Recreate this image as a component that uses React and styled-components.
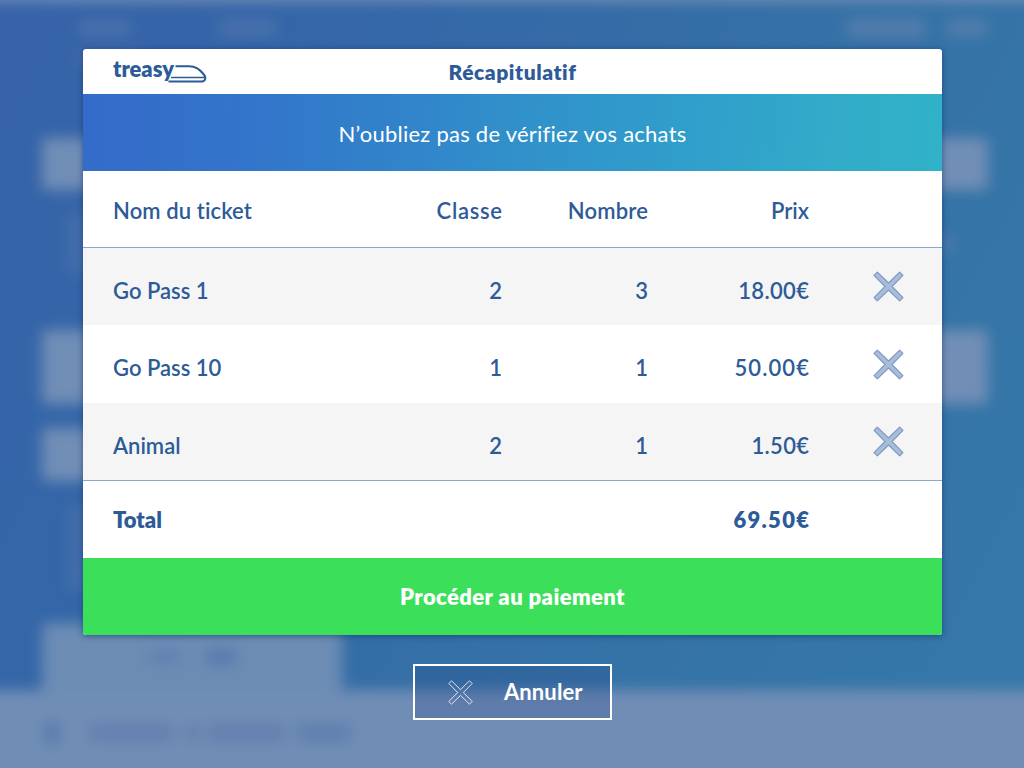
import React from "react";
import styled, { createGlobalStyle } from "styled-components";

const ink = "#2d5b98";

const GlobalStyle = createGlobalStyle`
  * { box-sizing: border-box; }
  body {
    margin: 0;
    font-family: Lato, "Open Sans", "Liberation Sans", sans-serif;
    font-size: 22px;
    font-variant-ligatures: none;
    color: ${ink};
    overflow: hidden;
  }
  button { font: inherit; color: inherit; cursor: pointer; }
`;

const Screen = styled.div`
  display: grid;
  width: 1024px;
  height: 768px;
  overflow: hidden;
  background: linear-gradient(118deg, #3763a9 0%, #3467a8 28%, #3570a6 55%, #3579a9 100%);
`;

/* Page behind the dialog, out of focus */
const Backdrop = styled.div`
  grid-area: 1 / 1;
  width: 1024px;
  height: 768px;
  display: flex;
  flex-direction: column;
  overflow: hidden;
`;

const Blurred = styled.div`
  display: flex;
  flex-direction: column;
  width: 1084px;
  margin: -30px -30px 0;
  flex: 0 0 828px;
  filter: blur(7px);
`;

const TopEdge = styled.div`
  height: 32px;
  flex: none;
  background: #6f8cb4;
`;

const BackdropBody = styled.div`
  display: flex;
  flex-direction: column;
  flex: 0 0 688px;
  padding: 13px 66px 0 72px;
`;

const BlurRow = styled.div`
  display: flex;
  flex: none;
  align-items: center;
  height: ${(p) => p.$h}px;
  margin-bottom: ${(p) => p.$gap || 0}px;
`;

const Smudge = styled.span`
  width: ${(p) => p.$w}px;
  height: ${(p) => p.$h || 16}px;
  margin-left: ${(p) => p.$left || 0}px;
  border-radius: 6px;
  background: ${(p) => p.$tone || "rgba(112, 135, 180, 0.4)"};
`;

const Field = styled.div`
  flex: none;
  width: ${(p) => (p.$w ? p.$w + "px" : "auto")};
  height: ${(p) => p.$h}px;
  margin-bottom: ${(p) => p.$gap}px;
  border-radius: 4px;
  background: #718eb6;
`;

const Tab = styled.div`
  display: flex;
  align-items: center;
  justify-content: center;
  gap: 24px;
  width: 300px;
  flex: 1;
  background: #6c8cb4;
`;

const BackdropFooter = styled.div`
  display: flex;
  align-items: center;
  flex: 1;
  padding: 0 0 22px 75px;
  background: #708db5;
`;

const Foreground = styled.main`
  grid-area: 1 / 1;
  z-index: 1;
  display: flex;
  flex-direction: column;
  align-items: center;
  padding-top: 49px;
`;

const Dialog = styled.section`
  width: 859px;
  display: flex;
  flex-direction: column;
  margin-left: 1px;
  border-radius: 3px;
  overflow: hidden;
  background: #fff;
  box-shadow: 0 1px 6px rgba(20, 50, 115, 0.65);
`;

const Header = styled.header`
  display: grid;
  grid-template-columns: 1fr auto 1fr;
  align-items: center;
  height: 45px;
  padding: 1px 30px 0;
`;

const Title = styled.h1`
  margin: 0;
  font-size: 21px;
  line-height: 26px;
  font-weight: 800;
  letter-spacing: ${(p) => p.$track}px;
`;

const Banner = styled.div`
  height: 77px;
  display: flex;
  align-items: center;
  justify-content: center;
  padding-top: 2px;
  color: #fff;
  font-weight: 400;
  letter-spacing: ${(p) => p.$track}px;
  background: linear-gradient(94deg, #346bca 0%, #3375ca 20%, #3184ca 38%, #3192ca 52%, #309ecb 70%, #33abc9 87%, #30b2c8 100%);
`;

const Row = styled.div`
  display: grid;
  grid-template-columns: 270px 119px 146px 161px 1fr;
  align-items: center;
  height: ${(p) => p.$h}px;
  padding: ${(p) => p.$drop || 0}px 38px 0 30px;
  font-weight: ${(p) => (p.$bold ? 800 : 600)};
  background: ${(p) => (p.$shade ? "#f5f5f5" : "#fff")};
  border-bottom: ${(p) => (p.$rule ? "1px solid #8ba6c9" : "none")};
`;

const Cell = styled.span`
  text-align: ${(p) => (p.$end ? "right" : "left")};
  letter-spacing: ${(p) => p.$track || 0}px;
  margin-right: ${(p) => -(p.$track || 0)}px;
  white-space: nowrap;
`;

const RemoveButton = styled.button`
  justify-self: end;
  display: flex;
  margin-top: -7px;
  padding: 0;
  border: 0;
  background: none;
`;

const PayButton = styled.button`
  height: 77px;
  border: 0;
  padding: 0;
  background: #3bdf59;
  color: #fff;
  font-weight: 800;
  letter-spacing: ${(p) => p.$track}px;
`;

const CancelButton = styled.button`
  display: flex;
  align-items: center;
  gap: 31px;
  width: 199px;
  height: 56px;
  margin: 29px 0 0 1px;
  padding: 0 0 0 33px;
  border: 2px solid #fff;
  background: rgba(28, 62, 128, 0.2);
  color: #fff;
  font-weight: 700;
  letter-spacing: ${(p) => p.$track}px;
`;

const CancelLabel = styled.span`
  padding-bottom: 2px;
`;

const CROSS = "M4.2 1 L15 11.6 L25.8 1 L29 4.2 L18.4 15 L29 25.8 L25.8 29 L15 18.4 L4.2 29 L1 25.8 L11.6 15 L1 4.2 Z";

const Cross = ({ size, fill, stroke, width }) => (
  <svg width={size} height={size} viewBox="0 0 30 30" aria-hidden="true">
    <path d={CROSS} fill={fill} stroke={stroke} strokeWidth={width} strokeLinejoin="round" />
  </svg>
);

const Logo = () => (
  <svg width="96" height="36" viewBox="0 -4 96 36" role="img" aria-label="treasy">
    <text x="0" y="19" fontSize="22.5" fontWeight="800" fill={ink} textLength="61" lengthAdjust="spacingAndGlyphs">treasy</text>
    <g fill="none" stroke={ink} strokeWidth="2">
      <path d="M62.5 8.2H76C83 8.2 86.5 11.6 90 15.5C94 20 92.5 23.6 88 23.6H55.5" />
      <path d="M58 19.4H92" strokeWidth="1.5" />
    </g>
  </svg>
);

const tickets = [
  { name: "Go Pass 1", cls: "2", count: "3", price: "18.00€", track: 0.35 },
  { name: "Go Pass 10", cls: "1", count: "1", price: "50.00€", track: 1.1 },
  { name: "Animal", cls: "2", count: "1", price: "1.50€", track: 0.3 },
];

export default function App() {
  return (
    <Screen>
      <GlobalStyle />
      <Backdrop aria-hidden="true">
        <Blurred>
          <TopEdge />
          <BackdropBody>
            <BlurRow $h={26} $gap={8}>
              <Smudge $w={54} $left={36} $tone="rgba(112,135,180,.36)" />
              <Smudge $w={60} $left={86} $tone="rgba(112,135,180,.36)" />
              <Smudge $w={80} $left={568} $h={20} $tone="rgba(112,135,180,.5)" />
              <Smudge $w={42} $left={20} $h={18} $tone="rgba(112,135,180,.5)" />
            </BlurRow>
            <BlurRow $h={20} $gap={69}>
              <Smudge $w={70} $left={34} $tone="rgba(112,135,180,.3)" />
            </BlurRow>
            <Field $h={52} $gap={24} />
            <BlurRow $h={60} $gap={56}>
              <Smudge $w={30} $h={60} $left={26} $tone="rgba(112,135,180,.25)" />
              <Smudge $w={20} $left={838} $tone="rgba(112,135,180,.35)" />
            </BlurRow>
            <Field $h={74} $gap={24} />
            <Field $h={53} $w={300} $gap={24} />
            <BlurRow $h={86} $gap={32}>
              <Smudge $w={30} $h={86} $left={26} $tone="rgba(112,135,180,.25)" />
            </BlurRow>
            <Tab>
              <Smudge $w={34} $h={14} $tone="rgba(92,120,175,.6)" />
              <Smudge $w={30} $h={16} $tone="rgba(80,112,170,.7)" />
            </Tab>
          </BackdropBody>
          <BackdropFooter>
            <Smudge $w={14} $h={24} $tone="rgba(80,115,170,.75)" />
            <Smudge $w={84} $left={30} $tone="rgba(88,118,172,.6)" />
            <Smudge $w={14} $left={12} $tone="rgba(88,118,172,.6)" />
            <Smudge $w={78} $left={8} $tone="rgba(88,118,172,.6)" />
            <Smudge $w={54} $left={12} $h={18} $tone="rgba(88,118,172,.65)" />
          </BackdropFooter>
        </Blurred>
      </Backdrop>

      <Foreground>
        <Dialog>
          <Header>
            <Logo />
            <Title $track={0.55}>Récapitulatif</Title>
          </Header>
          <Banner $track={0.25}>N’oubliez pas de vérifiez vos achats</Banner>
          <Row $h={77} $drop={2} $rule>
            <Cell $track={0.1}>Nom du ticket</Cell>
            <Cell $end $track={0.7}>Classe</Cell>
            <Cell $end $track={0.2}>Nombre</Cell>
            <Cell $end>Prix</Cell>
          </Row>
          {tickets.map((t, i) => (
            <Row key={t.name} $h={i === 0 ? 77 : 78} $drop={7} $shade={i % 2 === 0} $rule={i === 2}>
              <Cell>{t.name}</Cell>
              <Cell $end>{t.cls}</Cell>
              <Cell $end>{t.count}</Cell>
              <Cell $end $track={t.track}>{t.price}</Cell>
              <RemoveButton aria-label={"Supprimer " + t.name}>
                <Cross size={31} fill="#a9bcd8" stroke="#7b99c5" width={1.1} />
              </RemoveButton>
            </Row>
          ))}
          <Row $h={77} $bold>
            <Cell>Total</Cell>
            <span />
            <span />
            <Cell $end $track={1.3}>69.50€</Cell>
          </Row>
          <PayButton $track={0.4}>Procéder au paiement</PayButton>
        </Dialog>
        <CancelButton $track={0.1}>
          <Cross size={25} stroke="#fff" fill="none" width={1} />
          <CancelLabel>Annuler</CancelLabel>
        </CancelButton>
      </Foreground>
    </Screen>
  );
}
